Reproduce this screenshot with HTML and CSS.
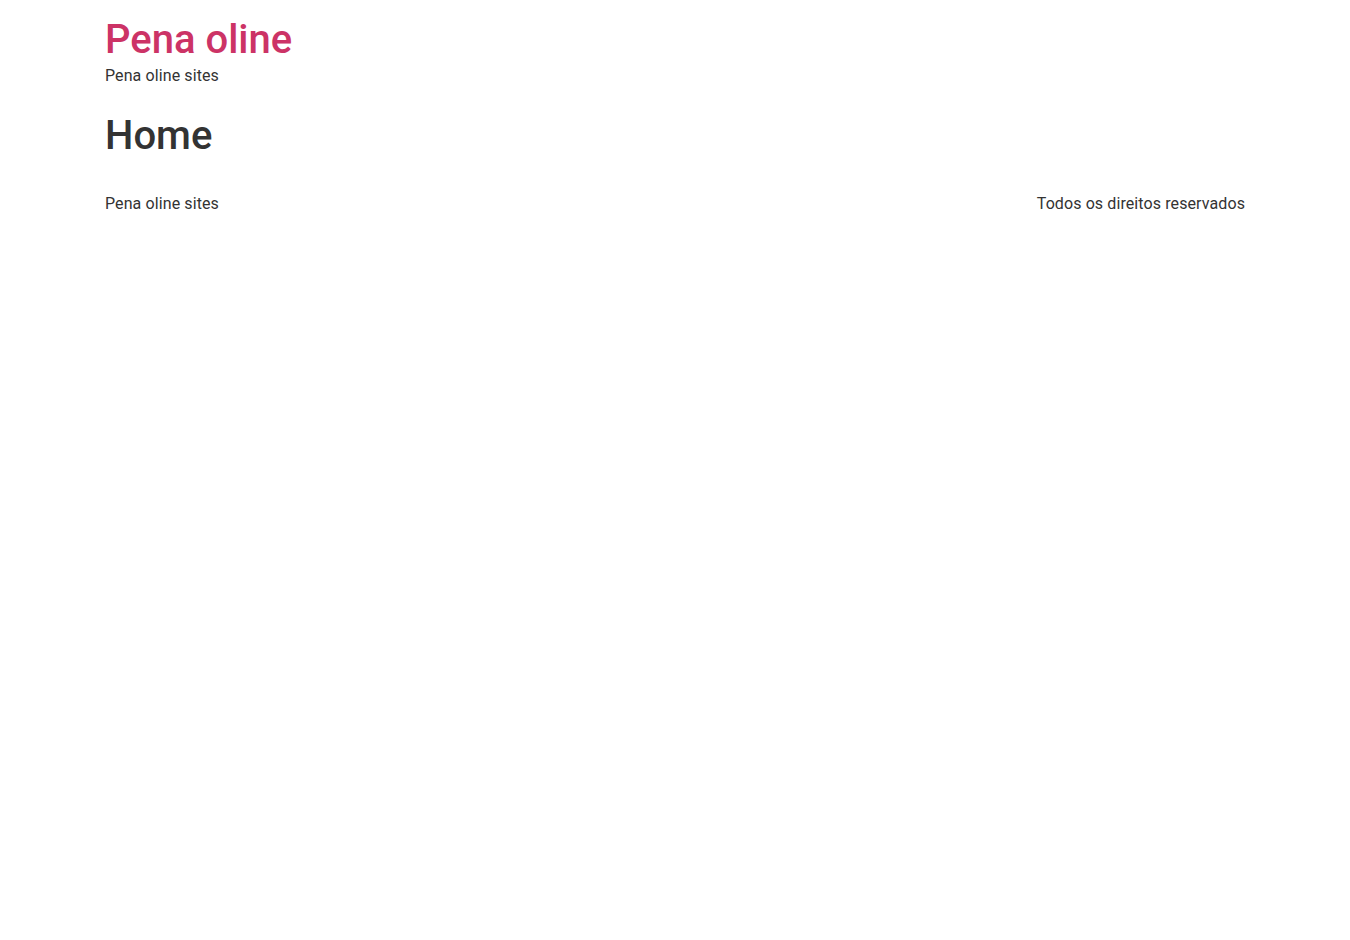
FILE: index.html
```html
<!DOCTYPE html>
<html lang="pt-BR">
<head>
    <meta charset="UTF-8">
    <meta name="viewport" content="width=device-width, initial-scale=1.0">
    <title>Pena oline</title>
    <link rel="stylesheet" href="styles.css">
</head>
<body>
    <header class="site-header">
        <div class="site-branding">
            <h1 class="site-title"><a href="#">Pena oline</a></h1>
            <p class="site-description">Pena oline sites</p>
        </div>
    </header>
    <main class="site-main">
        <div class="page-header">
            <h1 class="entry-title">Home</h1>
        </div>
        <div class="page-content"></div>
    </main>
    <footer class="site-footer">
        <div class="footer-inner">
            <p class="site-description">Pena oline sites</p>
            <p class="copyright">Todos os direitos reservados</p>
        </div>
    </footer>
</body>
</html>
```

FILE: styles.css
```css
* {
    box-sizing: border-box;
}
body {
    margin: 0;
    font-family: Roboto, "Liberation Sans", sans-serif;
    font-size: 16px;
    line-height: 1.5;
    color: #333;
    background-color: #fff;
}
p {
    margin: 0;
    letter-spacing: 0.1px;
}
a {
    color: #c36;
    text-decoration: none;
}
h1 {
    margin: 0;
    font-size: 40px;
    font-weight: 500;
    line-height: 1.2;
}
.site-header, .site-main, .site-footer {
    max-width: 1140px;
    margin: 0 auto;
}
.site-header {
    padding: 16px 0;
}
.page-header {
    padding: 8px 0 4px;
}
.page-content {
    padding-bottom: 12px;
}
.site-footer {
    padding: 16px 0;
}
.footer-inner {
    display: flex;
    justify-content: space-between;
    align-items: center;
}
```
